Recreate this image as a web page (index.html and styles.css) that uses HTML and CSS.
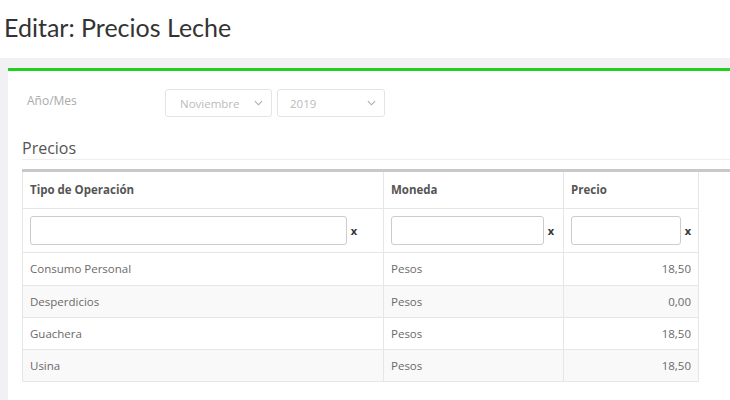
FILE: index.html
```html
<!DOCTYPE html>
<html lang="es">
<head>
<meta charset="utf-8">
<link rel="stylesheet" href="styles.css">
</head>
<body>
<h1 class="title">Editar: Precios Leche</h1>
<div class="page">
  <div class="panel">
    <div class="form-row">
      <label class="form-label">Año/Mes</label>
      <div class="select sel-month"><span>Noviembre</span><svg class="chev" viewBox="0 0 10 6" width="9" height="6"><path d="M1 1l4 4 4-4" fill="none" stroke="#aaa" stroke-width="1.2"/></svg></div>
      <div class="select sel-year"><span>2019</span><svg class="chev" viewBox="0 0 10 6" width="9" height="6"><path d="M1 1l4 4 4-4" fill="none" stroke="#aaa" stroke-width="1.2"/></svg></div>
    </div>
    <div class="section-title">Precios</div>
    <div class="table-wrap">
      <table class="grid">
        <colgroup><col class="c1"><col class="c2"><col class="c3"></colgroup>
        <thead>
          <tr class="head"><th>Tipo de Operación</th><th>Moneda</th><th>Precio</th></tr>
          <tr class="filter">
            <td class="f-wide"><div class="fcell"><span class="finput"></span><span class="fx">x</span></div></td>
            <td><div class="fcell"><span class="finput"></span><span class="fx">x</span></div></td>
            <td class="f-last"><div class="fcell"><span class="finput"></span><span class="fx">x</span></div></td>
          </tr>
        </thead>
        <tbody>
          <tr><td>Consumo Personal</td><td>Pesos</td><td class="num">18,50</td></tr>
          <tr class="alt"><td>Desperdicios</td><td>Pesos</td><td class="num">0,00</td></tr>
          <tr><td>Guachera</td><td>Pesos</td><td class="num">18,50</td></tr>
          <tr class="alt"><td>Usina</td><td>Pesos</td><td class="num">18,50</td></tr>
        </tbody>
      </table>
    </div>
  </div>
</div>
</body>
</html>
```
FILE: styles.css
```css
* { box-sizing: border-box; }
html, body { margin: 0; padding: 0; background: #fff; }
body { font-family: "Open Sans", "Liberation Sans", sans-serif; color: #555; width: 730px; height: 400px; overflow: hidden; }
.title {
  margin: 0;
  height: 58px;
  padding: 11px 0 0 4px;
  font-family: Lato, "Liberation Sans", sans-serif;
  font-weight: 400;
  font-size: 25px;
  line-height: 32px;
  color: #333;
}
.page { background: #f1f1f3; padding: 10px 0 0 8px; height: 342px; }
.panel {
  background: #fff;
  border-top: 3px solid #20cf20;
  padding: 17px 0 0 14px;
  height: 100%;
}
.form-row { display: flex; align-items: center; height: 30px; }
.form-label { width: 143px; padding-left: 5px; font-size: 12px; color: #aaa; margin-top: -6px; }
.select {
  display: flex; align-items: center; justify-content: space-between;
  height: 28px; border: 1px solid #e4e4e4; border-radius: 3px;
  padding: 0 8px 0 14px; font-size: 11.5px; color: #bbb; margin-right: 5px;
}
.sel-month { width: 107px; }
.sel-year { width: 108px; padding-left: 12px; }
.section-title {
  margin-top: 20px;
  font-size: 16px; line-height: 21px; color: #555;
  padding-bottom: 0;
  border-bottom: 1px solid #eee;
}
.table-wrap { margin-top: 9px; border-top: 3px solid #c8c8c8; }
.grid { border-collapse: collapse; width: 676px; table-layout: fixed; font-size: 11.5px; }
.c1 { width: 361px; } .c2 { width: 180px; } .c3 { width: 135px; }
.grid th, .grid td { border: 1px solid #e6e6e6; border-top: 0; padding: 0 7px; text-align: left; color: #6a6a6a; }
.grid .head th { height: 36px; font-weight: 700; color: #555; }
.grid .filter td { height: 44px; padding: 0 9px 0 7px; }
.grid .filter td.f-wide { padding-right: 26px; }
.grid .filter td.f-last { padding-right: 7px; }
.fcell { display: flex; align-items: center; }
.finput { flex: 1; height: 29px; border: 1px solid #ccc; border-radius: 3px; }
.fx { margin-left: 4px; font-weight: 700; color: #333; font-size: 11px; line-height: 1; }
.grid tbody td { height: 32px; }
.grid tbody tr:first-child td { height: 33px; }
.grid tr.alt td { background: #f9f9f9; }
.grid td.num { text-align: right; }
```
